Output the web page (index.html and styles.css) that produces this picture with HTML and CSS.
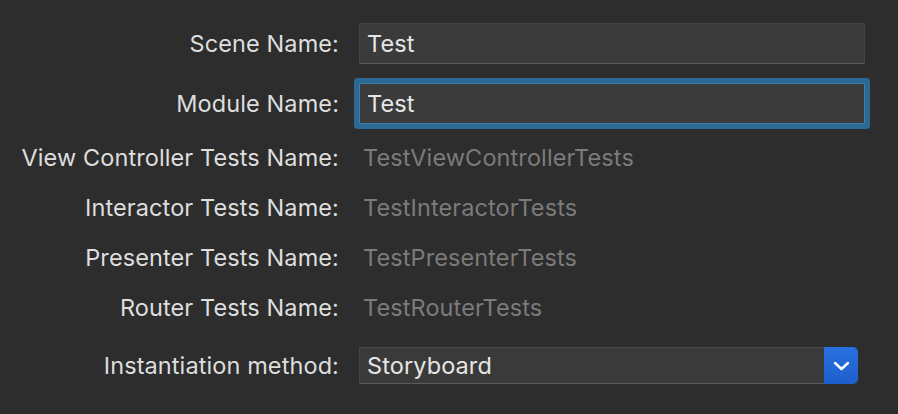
FILE: index.html
```html
<!DOCTYPE html>
<html>
<head>
<meta charset="utf-8">
<link rel="stylesheet" href="styles.css">
</head>
<body>
<div class="form">
  <div class="row row-field r1">
    <label class="label">Scene Name:</label>
    <div class="field">Test</div>
  </div>
  <div class="row row-field r2">
    <label class="label">Module Name:</label>
    <div class="field focused">Test</div>
  </div>
  <div class="row row-text">
    <label class="label">View Controller Tests Name:</label>
    <div class="value">TestViewControllerTests</div>
  </div>
  <div class="row row-text">
    <label class="label">Interactor Tests Name:</label>
    <div class="value">TestInteractorTests</div>
  </div>
  <div class="row row-text">
    <label class="label">Presenter Tests Name:</label>
    <div class="value">TestPresenterTests</div>
  </div>
  <div class="row row-text">
    <label class="label">Router Tests Name:</label>
    <div class="value">TestRouterTests</div>
  </div>
  <div class="row row-popup">
    <label class="label">Instantiation method:</label>
    <div class="popup">
      <div class="popup-text">Storyboard</div>
      <div class="popup-btn">
        <svg width="17" height="10" viewBox="0 0 17 10"><path d="M2 2 L8.5 8 L15 2" fill="none" stroke="#ffffff" stroke-width="2.4" stroke-linecap="round" stroke-linejoin="round"/></svg>
      </div>
    </div>
  </div>
</div>
</body>
</html>
```

FILE: styles.css
```css
html, body {
  margin: 0;
  padding: 0;
  background: #2d2d2d;
}
body {
  width: 898px;
  height: 414px;
  overflow: hidden;
  font-family: Inter, "Noto Sans", sans-serif;
  font-size: 23.5px;
  letter-spacing: 0.1px;
  color: #dedede;
}
.form {
  display: flex;
  flex-direction: column;
  padding-top: 23px;
}
.row {
  display: grid;
  grid-template-columns: 339px 1fr;
  column-gap: 20px;
  align-items: center;
}
.label {
  text-align: right;
  color: #dedede;
  white-space: nowrap;
}
.row-field { height: 41px; padding-right: 33px; }
.r2 { margin-top: 19px; margin-bottom: 8px; }
.row-text { height: 50px; }
.row-popup { height: 37px; margin-top: 15px; padding-right: 40px; }
.field {
  height: 41px;
  box-sizing: border-box;
  background: #3b3b3b;
  border: 1px solid #444444;
  border-bottom-color: #5a5a5a;
  padding-left: 7px;
  display: flex;
  align-items: center;
  color: #e6e6e6;
}
.field.focused {
  border: 1px solid #3d7db0;
  border-radius: 1px;
  box-shadow: 0 0 0 5px #2c6995;
}
.value {
  padding-left: 4px;
  color: #7b7b7b;
  white-space: nowrap;
}
.popup {
  height: 37px;
  display: flex;
  box-sizing: border-box;
}
.popup-text {
  flex: 1;
  background: #3a3a3a;
  border-top: 1px solid #474747;
  border-bottom: 1px solid #5a5a5a;
  border-left: 1px solid #444444;
  display: flex;
  align-items: center;
  padding-left: 7px;
  color: #e6e6e6;
}
.popup-btn {
  width: 34px;
  background: linear-gradient(#2a6fe0, #1d5fcc);
  border-radius: 0 5px 5px 0;
  display: flex;
  align-items: center;
  justify-content: center;
}
```
